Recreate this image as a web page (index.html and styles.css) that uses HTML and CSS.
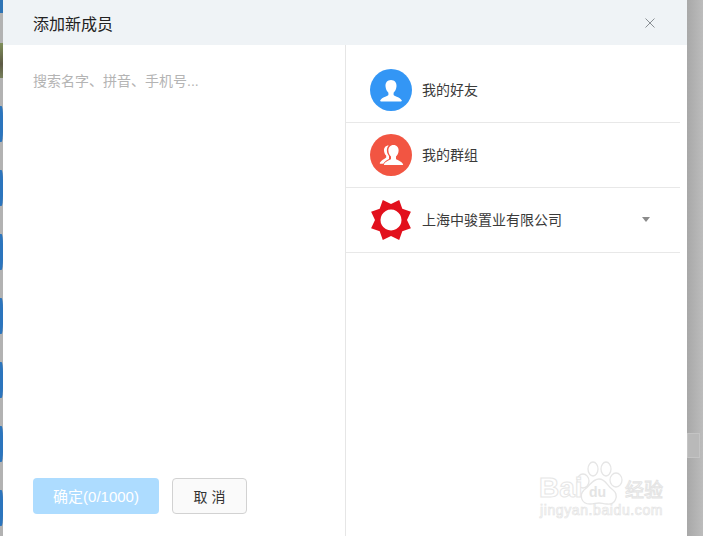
FILE: index.html
```html
<!DOCTYPE html>
<html lang="zh">
<head>
<meta charset="utf-8">
<title>添加新成员</title>
<link rel="stylesheet" href="styles.css">
</head>
<body>
<div class="page">
  <div class="strip-left">
    <span class="top"></span>
    <span class="thumb"></span>
    <span class="blob"></span><span class="blob"></span><span class="blob"></span><span class="blob"></span><span class="blob"></span><span class="blob"></span><span class="blob"></span>
  </div>
  <main class="dialog">
    <header class="head">
      <h1 class="title">添加新成员</h1>
      <svg class="close" viewBox="0 0 10 10" width="10" height="10"><path d="M.5.5l9 9M9.5.5l-9 9" stroke="#8a8f94" stroke-width="1" fill="none"/></svg>
    </header>
    <div class="body">
      <section class="left">
        <div class="search">搜索名字、拼音、手机号...</div>
        <div class="actions">
          <button class="btn-ok">确定(0/1000)</button>
          <button class="btn-cancel">取 消</button>
        </div>
      </section>
      <section class="right">
        <div class="row">
          <svg class="avatar" viewBox="0 0 42 42" width="42" height="42"><circle cx="21" cy="21" r="21" fill="#3396f5"/><path d="M21 11c-3.700 0-5.700 2.800-5.500 6.200.2 3 1.500 5.200 2.900 6.500v2.200c-1 1.300-6.200 2.100-8.100 5.400-.3.600 0 1.100.7 1.100h20c.7 0 1-.5.700-1.100-1.900-3.300-7.100-4.100-8.100-5.400v-2.200c1.400-1.300 2.700-3.500 2.900-6.500.2-3.400-1.800-6.200-5.500-6.200z" fill="#fff"/></svg>
          <span class="label">我的好友</span>
        </div>
        <div class="row">
          <svg class="avatar" viewBox="0 0 42 42" width="42" height="42"><circle cx="21" cy="21" r="21" fill="#f25542"/><path d="M18.500 11.500c-2.800 0-4.600 2.200-4.500 5 .1 2.300 1 4 2.200 5.100v1.900c-.8 1-3.800 1.900-6.200 5-.5.700-.1 1.300.5 1.300h2.800c1-2.600 4.200-3.900 5.700-4.900v-3c-1.300-1.300-2-3.300-2.100-5.200-.1-2 .5-3.900 1.900-5.200-.1 0-.2 0-.3 0z" fill="#fff"/><path d="M23.500 11c-3.300 0-5.300 2.500-5.100 5.700.2 2.700 1.300 4.700 2.600 5.900v2.400c-1 1.200-5.200 2-7 5-.3.600 0 1 .6 1h17.800c.6 0 .9-.4.600-1-1.800-3-6-3.800-7-5v-2.400c1.300-1.200 2.400-3.200 2.600-5.900.2-3.200-1.800-5.700-5.100-5.700z" fill="#fff"/></svg>
          <span class="label">我的群组</span>
        </div>
        <div class="row">
          <svg class="avatar" viewBox="0 0 42 42" width="42" height="42"><path fill-rule="evenodd" d="M12.800 1.100L21 5 29.200 1.100 32.300 9.700 40.900 12.800 37 21 40.900 29.200 32.300 32.300 29.200 40.900 21 37 12.800 40.900 9.700 32.300 1.100 29.200 5 21 1.100 12.800 9.700 9.700zM21 10.500a10.500 10.500 0 1 0 .01 0z" fill="#e2101c"/></svg>
          <span class="label">上海中骏置业有限公司</span>
          <svg class="caret" viewBox="0 0 8 5" width="8" height="5"><path d="M0 0h8L4 5z" fill="#8b8b8b"/></svg>
        </div>
      </section>
    </div>
  </main>
  <div class="strip-right"><span class="ghost"></span></div>
  <div class="watermark">
    <svg class="paw" viewBox="0 0 60 50" width="60" height="50"><g fill="#fff" stroke="#e6e6e6" stroke-width="1.300"><ellipse cx="19" cy="21" rx="6" ry="7"/><ellipse cx="29" cy="9" rx="5" ry="7"/><ellipse cx="42" cy="9" rx="5" ry="7"/><ellipse cx="52" cy="20" rx="6" ry="7"/><path d="M35 19c7 0 8 7 14 11 6 5 3 15-6 14-4 0-5-1-8-1s-5 1-9 1c-9 0-11-9-6-14 6-4 8-11 15-11z"/></g></svg>
    <div class="wm-line"><span class="wm-bai">Bai</span><span class="wm-du">du</span><span class="wm-cn">经验</span></div>
    <div class="wm-url">jingyan.baidu.com</div>
  </div>
</div>
</body>
</html>
```
FILE: styles.css
```css
* { box-sizing: border-box; }
html, body { margin: 0; padding: 0; }
body { font-family: "Liberation Sans", "Noto Sans CJK SC", sans-serif; background: #b4b4b4; }
.page { position: relative; display: flex; width: 703px; height: 536px; overflow: hidden; }
.strip-left { width: 3px; flex: none; display: flex; flex-direction: column; overflow: hidden; background: #b2b2b2; }
.top { flex: none; height: 13px; background: #2f74b5; }
.thumb { flex: none; height: 35px; margin-top: 30px; background: linear-gradient(#7f8f5a, #5d5a45 60%, #77805c); }
.blob { flex: none; height: 36px; margin-top: 28px; background: #2c75bd; border-radius: 0 50% 50% 0 / 0 30% 30% 0; }
.dialog { width: 684px; flex: none; display: flex; flex-direction: column; background: #fff; }
.head { height: 45px; flex: none; display: flex; align-items: center; justify-content: space-between; padding: 0 32px 0 30px; background: #eff3f6; }
.title { margin: 0; font-size: 16px; font-weight: 400; color: #222; }
.body { flex: 1; display: flex; min-height: 0; }
.left { width: 343px; flex: none; display: flex; flex-direction: column; justify-content: space-between; border-right: 1px solid #e6e6e6; padding: 27px 0 22px 30px; }
.search { font-size: 14px; line-height: 18px; color: #b4b4b4; }
.actions { display: flex; gap: 13px; }
.btn-ok, .btn-cancel { font-family: inherit; height: 36px; border-radius: 4px; padding: 0; font-size: 14px; }
.btn-ok { width: 126px; border: none; background: #addcff; color: #fff; font-size: 15px; padding-bottom: 2px; }
.btn-cancel { width: 75px; border: 1px solid #d2d2d2; background: #fafafa; color: #333; }
.right { flex: 1; padding: 13px 7px 0 0; }
.row { height: 65px; display: flex; align-items: center; padding-left: 24px; border-bottom: 1px solid #e8e8e8; }
.avatar { flex: none; margin-right: 10px; }
.label { font-size: 14px; line-height: 18px; color: #3a3a3a; }
.caret { margin-left: auto; margin-right: 30px; margin-bottom: 1px; }
.strip-right { flex: 1; background: linear-gradient(90deg, #a8a8a8, #bcbcbc); padding-top: 433px; }
.ghost { display: block; height: 25px; margin-right: 3px; border: 1px solid #c4c4c4; background: #b9b9b9; }
.watermark { position: absolute; left: 539px; top: 460px; width: 130px; height: 62px; color: #e6e6e6; }
.paw { position: absolute; left: 25px; top: 0; }
.wm-line { position: absolute; left: 0; top: 12px; display: flex; align-items: baseline; font-weight: 700; }
.wm-bai { font-size: 28px; width: 50px; color: #fff; -webkit-text-stroke: 1px #e6e6e6; }
.wm-du { font-size: 14px; width: 36px; color: #e4e4e4; }
.wm-cn { font-size: 19px; font-weight: 400; color: #fff; -webkit-text-stroke: 1px #e4e4e4; }
.wm-url { position: absolute; left: 1px; top: 42px; font-size: 14px; letter-spacing: .6px; color: #fff; -webkit-text-stroke: .7px #e4e4e4; }
```
